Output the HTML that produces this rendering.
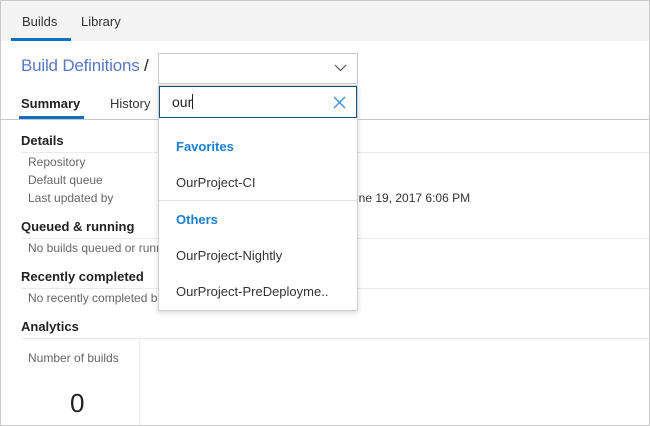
<!DOCTYPE html>
<html><head><style>
*{margin:0;padding:0;box-sizing:border-box}
body{width:650px;height:426px;overflow:hidden;font-family:"Liberation Sans",sans-serif;background:#fff;position:relative;color:#222}
.frame{position:absolute;left:0;top:0;width:650px;height:426px;border:1px solid #c8c8c8;pointer-events:none;z-index:20}
.a{position:absolute;white-space:nowrap}
.hdr{position:absolute;left:0;top:0;width:650px;height:41px;background:#f4f4f4}
.g{color:#666;font-size:12px}
.h{font-size:13px;font-weight:bold;color:#222}
.line{position:absolute;height:1px;background:#eaeaea}
</style></head><body>
<div class="hdr"></div>
<div class="a" style="left:22px;top:14px;font-size:13px;color:#333">Builds</div>
<div class="a" style="left:81px;top:14px;font-size:13px;color:#333">Library</div>
<div class="a" style="left:11px;top:38px;width:60px;height:3px;background:#106ebe"></div>

<div class="a" style="left:21px;top:56px;font-size:17px;color:#5a79c4;letter-spacing:-0.2px">Build Definitions <span style="color:#222">/</span></div>
<div class="a" style="left:158px;top:53px;width:200px;height:31px;border:1px solid #c8c8c8;background:#fff"></div>
<svg class="a" style="left:334px;top:64px" width="13" height="8"><path d="M1 1 L6.5 6.5 L12 1" fill="none" stroke="#555" stroke-width="1.2"/></svg>

<div class="a" style="left:21px;top:96px;font-size:13px;font-weight:bold">Summary</div>
<div class="a" style="left:19px;top:116px;width:65px;height:3px;background:#106ebe"></div>
<div class="a" style="left:110px;top:96px;font-size:13px;color:#333">History</div>
<div class="line" style="left:0;top:119px;width:650px;background:#c8c8c8"></div>

<div class="a h" style="left:21px;top:133px">Details</div>
<div class="line" style="left:21px;top:152px;width:629px"></div>
<div class="a g" style="left:28px;top:155px">Repository</div>
<div class="a g" style="left:28px;top:173px">Default queue</div>
<div class="a g" style="left:28px;top:191px">Last updated by</div>
<div class="a" style="left:346px;top:191px;font-size:12px;color:#333">June 19, 2017 6:06 PM</div>

<div class="a h" style="left:21px;top:219px">Queued &amp; running</div>
<div class="line" style="left:21px;top:238px;width:629px"></div>
<div class="a g" style="left:28px;top:241px">No builds queued or running</div>

<div class="a h" style="left:21px;top:269px">Recently completed</div>
<div class="line" style="left:21px;top:288px;width:629px"></div>
<div class="a g" style="left:28px;top:291px">No recently completed builds</div>

<div class="a h" style="left:21px;top:319px">Analytics</div>
<div class="line" style="left:21px;top:338px;width:629px"></div>
<div class="a" style="left:139px;top:338px;width:1px;height:88px;background:#eaeaea"></div>
<div class="a g" style="left:28px;top:351px">Number of builds</div>
<div class="a" style="left:70px;top:388px;font-size:26px;color:#222">0</div>

<div class="a" style="left:158px;top:85px;width:200px;height:226px;background:#fff;border:1px solid #d0d0d0;box-shadow:0 2px 5px rgba(0,0,0,0.15);z-index:5">
  <div class="a" style="left:0;top:0;width:198px;height:32px;border:1px solid #1e4f7a"></div>
  <div class="a" style="left:13px;top:8px;font-size:14px;color:#222">our<span style="display:inline-block;width:1px;height:15px;background:#222;vertical-align:-2px"></span></div>
  <svg class="a" style="left:174px;top:10px" width="13" height="13"><path d="M1 1 L12 12 M12 1 L1 12" stroke="#3b8fd6" stroke-width="1.3"/></svg>
  <div class="a" style="left:17px;top:53px;font-size:13px;font-weight:bold;color:#1a7fd4">Favorites</div>
  <div class="a" style="left:17px;top:89px;font-size:13px;color:#333">OurProject-CI</div>
  <div class="a" style="left:0;top:114px;width:198px;height:1px;background:#e4e4e4"></div>
  <div class="a" style="left:17px;top:126px;font-size:13px;font-weight:bold;color:#1a7fd4">Others</div>
  <div class="a" style="left:17px;top:162px;font-size:13px;color:#333">OurProject-Nightly</div>
  <div class="a" style="left:17px;top:198px;font-size:13px;color:#333">OurProject-PreDeployme..</div>
</div>
<div class="frame"></div>
</body></html>
